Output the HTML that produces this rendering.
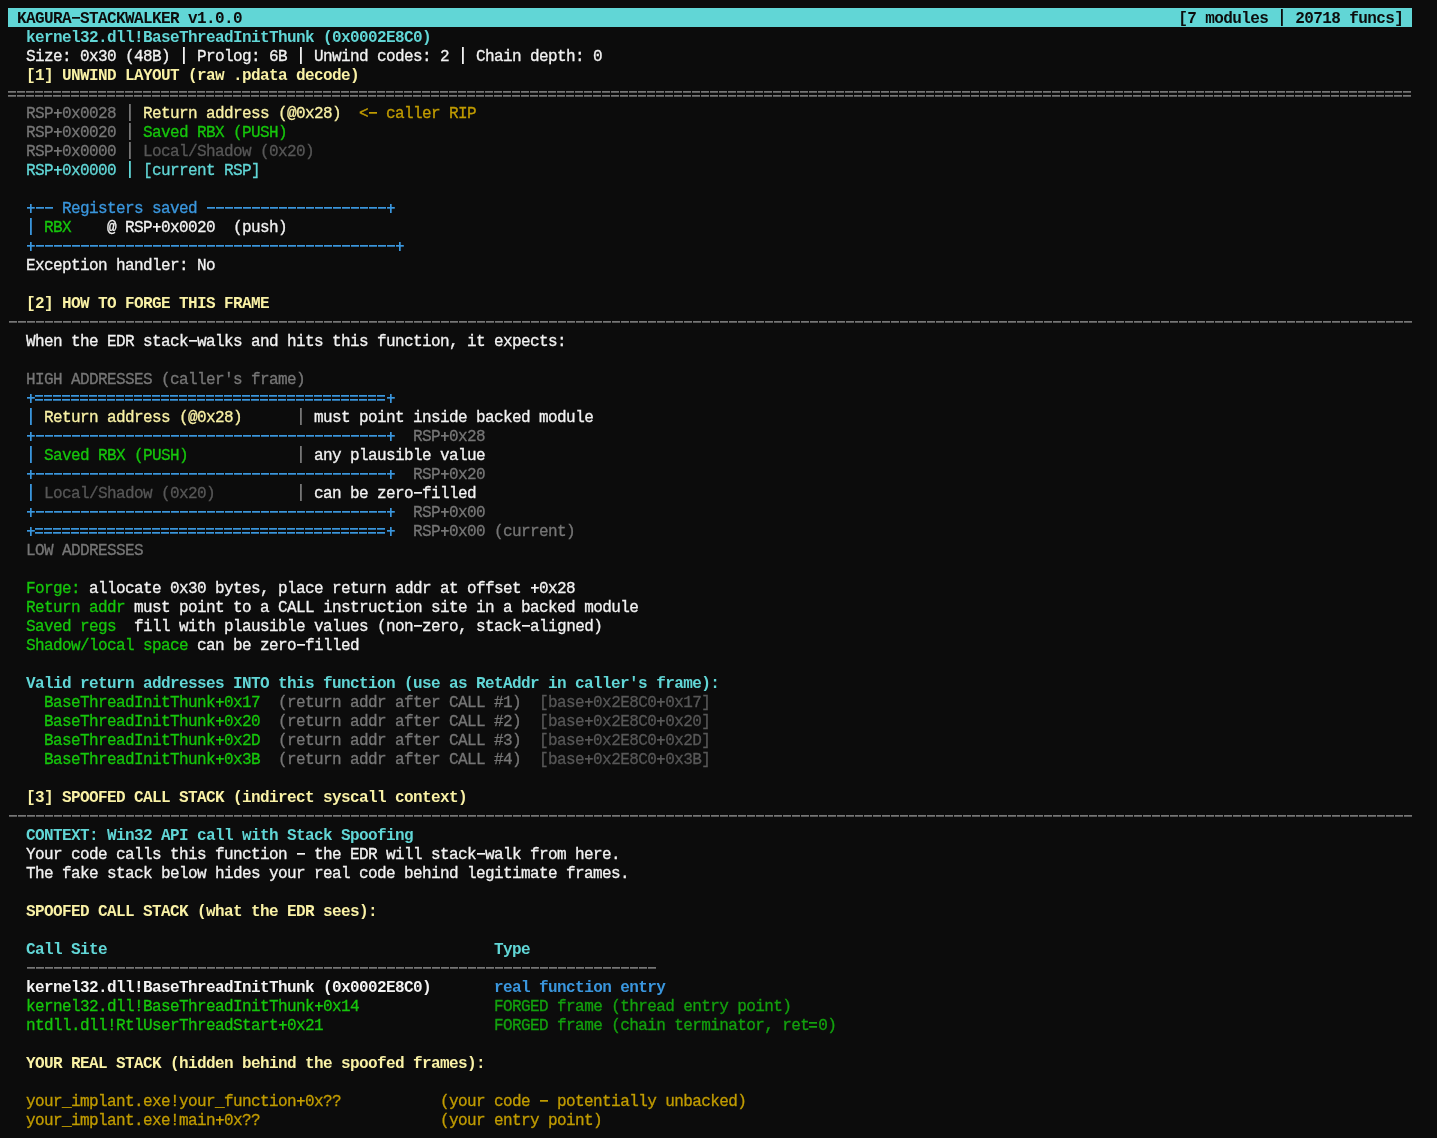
<!DOCTYPE html><html><head><meta charset="utf-8"><style>
html,body{margin:0;padding:0;background:#0c0c0c;width:1437px;height:1138px;overflow:hidden;position:relative}
.t{position:absolute;left:8px;width:1404px;height:19px;white-space:pre;font-family:"Liberation Mono",monospace;font-size:16px;letter-spacing:-0.6px;line-height:19px;color:#f2f2f2;-webkit-text-stroke-width:0.3px}
.hdr{position:absolute;left:8px;top:8px;width:1404px;height:19px;background:#61d6d6}
.s{position:absolute}
.wrap{position:absolute;left:0;top:0;width:1437px;height:1138px;will-change:transform}
.w{color:#f2f2f2}.Wb{color:#f2f2f2;font-weight:bold}
.g{color:#767676}.d{color:#575757}
.c{color:#61d6d6}.cb{color:#61d6d6;font-weight:bold}
.b{color:#3a96dd}.bb{color:#3a96dd;font-weight:bold}
.gr{color:#16c60c}.gd{color:#13a10e}
.y{color:#c19c00}
.Y{color:#f9f1a5}.Yb{color:#f9f1a5;font-weight:bold}
.k{color:#0c0c0c;font-weight:bold}
.Wb,.cb,.bb,.Yb,.k{-webkit-text-stroke-width:0}
.dash{height:2px;background-image:linear-gradient(to right,transparent .6px,var(--c) .6px,var(--c) 8.6px,transparent 8.6px);background-size:9px 2px;background-repeat:repeat-x;-webkit-mask-image:linear-gradient(to bottom,#000 1px,rgba(0,0,0,.72) 1px)}
.eq{height:6px;background-image:linear-gradient(to right,transparent .5px,var(--c) .5px,var(--c) 8.5px,transparent 8.5px),linear-gradient(to right,transparent .5px,var(--c) .5px,var(--c) 8.5px,transparent 8.5px);background-size:9px 2px,9px 2px;background-position:0 0,0 4px;background-repeat:repeat-x;-webkit-mask-image:linear-gradient(to bottom,#000 1px,rgba(0,0,0,.72) 1px,rgba(0,0,0,.72) 2px,#000 2px,#000 5px,rgba(0,0,0,.72) 5px)}
.pl{width:9px;height:19px;background:linear-gradient(var(--c),var(--c)) no-repeat .8px 9.1px/7.8px 1.7px,linear-gradient(var(--c),var(--c)) no-repeat 3.9px 5.5px/1.7px 9px}
.vb{width:9px;height:19px;background:linear-gradient(var(--c),var(--c)) no-repeat 3.9px 1px/1.8px 17px}
</style></head><body>
<div class="wrap">
<div class="hdr"></div>
<div class="t" style="top:10px"><span class="k"> KAGURA STACKWALKER v1.0.0                                                                                                        [7 modules   20718 funcs] </span></div>
<div class="t" style="top:29px">  <span class="cb">kernel32.dll!BaseThreadInitThunk (0x0002E8C0)</span></div>
<div class="t" style="top:48px"><span class="w">  Size: 0x30 (48B)   Prolog: 6B   Unwind codes: 2   Chain depth: 0</span></div>
<div class="t" style="top:67px">  <span class="Yb">[1] UNWIND LAYOUT (raw .pdata decode)</span></div>
<div class="t" style="top:105px"><span class="g">  RSP 0x0028   </span><span class="Y">Return address (@0x28)</span><span class="y">  &lt;  caller RIP</span></div>
<div class="t" style="top:124px"><span class="g">  RSP 0x0020   </span><span class="gr">Saved RBX (PUSH)</span></div>
<div class="t" style="top:143px"><span class="g">  RSP 0x0000   </span><span class="d">Local/Shadow (0x20)</span></div>
<div class="t" style="top:162px"><span class="c">  RSP 0x0000   [current RSP]</span></div>
<div class="t" style="top:200px">      <span class="b">Registers saved</span>                      </div>
<div class="t" style="top:219px">    <span class="gr">RBX</span><span class="w">    @ RSP 0x0020  (push)</span></div>
<div class="t" style="top:257px"><span class="w">  Exception handler: No</span></div>
<div class="t" style="top:295px">  <span class="Yb">[2] HOW TO FORGE THIS FRAME</span></div>
<div class="t" style="top:333px"><span class="w">  When the EDR stack walks and hits this function, it expects:</span></div>
<div class="t" style="top:371px"><span class="g">  HIGH ADDRESSES (caller&#x27;s frame)</span></div>
<div class="t" style="top:409px">    <span class="Y">Return address (@0x28)</span>       <span class="w"> must point inside backed module</span></div>
<div class="t" style="top:428px">                                           <span class="g">  RSP 0x28</span></div>
<div class="t" style="top:447px">    <span class="gr">Saved RBX (PUSH)</span>             <span class="w"> any plausible value</span></div>
<div class="t" style="top:466px">                                           <span class="g">  RSP 0x20</span></div>
<div class="t" style="top:485px">    <span class="d">Local/Shadow (0x20)</span>          <span class="w"> can be zero filled</span></div>
<div class="t" style="top:504px">                                           <span class="g">  RSP 0x00</span></div>
<div class="t" style="top:523px">                                           <span class="g">  RSP 0x00 (current)</span></div>
<div class="t" style="top:542px"><span class="g">  LOW ADDRESSES</span></div>
<div class="t" style="top:580px">  <span class="gr">Forge:</span><span class="w"> allocate 0x30 bytes, place return addr at offset  0x28</span></div>
<div class="t" style="top:599px">  <span class="gr">Return addr</span><span class="w"> must point to a CALL instruction site in a backed module</span></div>
<div class="t" style="top:618px">  <span class="gr">Saved regs</span><span class="w">  fill with plausible values (non zero, stack aligned)</span></div>
<div class="t" style="top:637px">  <span class="gr">Shadow/local space</span><span class="w"> can be zero filled</span></div>
<div class="t" style="top:675px">  <span class="cb">Valid return addresses INTO this function (use as RetAddr in caller&#x27;s frame):</span></div>
<div class="t" style="top:694px">    <span class="gr">BaseThreadInitThunk 0x17</span><span class="g">  (return addr after CALL #1)</span><span class="d">  [base 0x2E8C0 0x17]</span></div>
<div class="t" style="top:713px">    <span class="gr">BaseThreadInitThunk 0x20</span><span class="g">  (return addr after CALL #2)</span><span class="d">  [base 0x2E8C0 0x20]</span></div>
<div class="t" style="top:732px">    <span class="gr">BaseThreadInitThunk 0x2D</span><span class="g">  (return addr after CALL #3)</span><span class="d">  [base 0x2E8C0 0x2D]</span></div>
<div class="t" style="top:751px">    <span class="gr">BaseThreadInitThunk 0x3B</span><span class="g">  (return addr after CALL #4)</span><span class="d">  [base 0x2E8C0 0x3B]</span></div>
<div class="t" style="top:789px">  <span class="Yb">[3] SPOOFED CALL STACK (indirect syscall context)</span></div>
<div class="t" style="top:827px">  <span class="cb">CONTEXT: Win32 API call with Stack Spoofing</span></div>
<div class="t" style="top:846px"><span class="w">  Your code calls this function   the EDR will stack walk from here.</span></div>
<div class="t" style="top:865px"><span class="w">  The fake stack below hides your real code behind legitimate frames.</span></div>
<div class="t" style="top:903px">  <span class="Yb">SPOOFED CALL STACK (what the EDR sees):</span></div>
<div class="t" style="top:941px">  <span class="cb">Call Site</span>                                           <span class="cb">Type</span></div>
<div class="t" style="top:979px">  <span class="Wb">kernel32.dll!BaseThreadInitThunk (0x0002E8C0)</span>       <span class="bb">real function entry</span></div>
<div class="t" style="top:998px">  <span class="gr">kernel32.dll!BaseThreadInitThunk 0x14               </span><span class="gd">FORGED frame (thread entry point)</span></div>
<div class="t" style="top:1017px">  <span class="gr">ntdll.dll!RtlUserThreadStart 0x21                   </span><span class="gd">FORGED frame (chain terminator, ret 0)</span></div>
<div class="t" style="top:1055px">  <span class="Yb">YOUR REAL STACK (hidden behind the spoofed frames):</span></div>
<div class="t" style="top:1093px">  <span class="y">your_implant.exe!your_function 0x??           </span><span class="y">(your code   potentially unbacked)</span></div>
<div class="t" style="top:1112px">  <span class="y">your_implant.exe!main 0x??                    </span><span class="y">(your entry point)</span></div>
<div class="s dash" style="left:71px;top:17px;width:9px;--c:#0c0c0c"></div>
<div class="s vb" style="left:1277px;top:8px;--c:#0c0c0c"></div>
<div class="s vb" style="left:179px;top:46px;--c:#f2f2f2"></div>
<div class="s vb" style="left:296px;top:46px;--c:#f2f2f2"></div>
<div class="s vb" style="left:458px;top:46px;--c:#f2f2f2"></div>
<div class="s eq" style="left:8px;top:91px;width:1404px;--c:#767676"></div>
<div class="s pl" style="left:53px;top:103px;--c:#767676"></div>
<div class="s vb" style="left:125px;top:103px;--c:#767676"></div>
<div class="s dash" style="left:368px;top:112px;width:9px;--c:#c19c00"></div>
<div class="s pl" style="left:53px;top:122px;--c:#767676"></div>
<div class="s vb" style="left:125px;top:122px;--c:#767676"></div>
<div class="s pl" style="left:53px;top:141px;--c:#767676"></div>
<div class="s vb" style="left:125px;top:141px;--c:#767676"></div>
<div class="s pl" style="left:53px;top:160px;--c:#61d6d6"></div>
<div class="s vb" style="left:125px;top:160px;--c:#61d6d6"></div>
<div class="s pl" style="left:26px;top:198px;--c:#3a96dd"></div>
<div class="s dash" style="left:35px;top:207px;width:18px;--c:#3a96dd"></div>
<div class="s dash" style="left:206px;top:207px;width:180px;--c:#3a96dd"></div>
<div class="s pl" style="left:386px;top:198px;--c:#3a96dd"></div>
<div class="s vb" style="left:26px;top:217px;--c:#3a96dd"></div>
<div class="s pl" style="left:152px;top:217px;--c:#f2f2f2"></div>
<div class="s pl" style="left:26px;top:236px;--c:#3a96dd"></div>
<div class="s dash" style="left:35px;top:245px;width:360px;--c:#3a96dd"></div>
<div class="s pl" style="left:395px;top:236px;--c:#3a96dd"></div>
<div class="s dash" style="left:8px;top:321px;width:1404px;--c:#767676"></div>
<div class="s dash" style="left:188px;top:340px;width:9px;--c:#f2f2f2"></div>
<div class="s pl" style="left:26px;top:388px;--c:#3a96dd"></div>
<div class="s eq" style="left:35px;top:395px;width:351px;--c:#3a96dd"></div>
<div class="s pl" style="left:386px;top:388px;--c:#3a96dd"></div>
<div class="s vb" style="left:26px;top:407px;--c:#3a96dd"></div>
<div class="s vb" style="left:296px;top:407px;--c:#767676"></div>
<div class="s pl" style="left:26px;top:426px;--c:#3a96dd"></div>
<div class="s dash" style="left:35px;top:435px;width:351px;--c:#3a96dd"></div>
<div class="s pl" style="left:386px;top:426px;--c:#3a96dd"></div>
<div class="s pl" style="left:440px;top:426px;--c:#767676"></div>
<div class="s vb" style="left:26px;top:445px;--c:#3a96dd"></div>
<div class="s vb" style="left:296px;top:445px;--c:#767676"></div>
<div class="s pl" style="left:26px;top:464px;--c:#3a96dd"></div>
<div class="s dash" style="left:35px;top:473px;width:351px;--c:#3a96dd"></div>
<div class="s pl" style="left:386px;top:464px;--c:#3a96dd"></div>
<div class="s pl" style="left:440px;top:464px;--c:#767676"></div>
<div class="s vb" style="left:26px;top:483px;--c:#3a96dd"></div>
<div class="s vb" style="left:296px;top:483px;--c:#767676"></div>
<div class="s dash" style="left:413px;top:492px;width:9px;--c:#f2f2f2"></div>
<div class="s pl" style="left:26px;top:502px;--c:#3a96dd"></div>
<div class="s dash" style="left:35px;top:511px;width:351px;--c:#3a96dd"></div>
<div class="s pl" style="left:386px;top:502px;--c:#3a96dd"></div>
<div class="s pl" style="left:440px;top:502px;--c:#767676"></div>
<div class="s pl" style="left:26px;top:521px;--c:#3a96dd"></div>
<div class="s eq" style="left:35px;top:528px;width:351px;--c:#3a96dd"></div>
<div class="s pl" style="left:386px;top:521px;--c:#3a96dd"></div>
<div class="s pl" style="left:440px;top:521px;--c:#767676"></div>
<div class="s pl" style="left:530px;top:578px;--c:#f2f2f2"></div>
<div class="s dash" style="left:413px;top:625px;width:9px;--c:#f2f2f2"></div>
<div class="s dash" style="left:521px;top:625px;width:9px;--c:#f2f2f2"></div>
<div class="s dash" style="left:296px;top:644px;width:9px;--c:#f2f2f2"></div>
<div class="s pl" style="left:215px;top:692px;--c:#16c60c"></div>
<div class="s pl" style="left:584px;top:692px;--c:#575757"></div>
<div class="s pl" style="left:656px;top:692px;--c:#575757"></div>
<div class="s pl" style="left:215px;top:711px;--c:#16c60c"></div>
<div class="s pl" style="left:584px;top:711px;--c:#575757"></div>
<div class="s pl" style="left:656px;top:711px;--c:#575757"></div>
<div class="s pl" style="left:215px;top:730px;--c:#16c60c"></div>
<div class="s pl" style="left:584px;top:730px;--c:#575757"></div>
<div class="s pl" style="left:656px;top:730px;--c:#575757"></div>
<div class="s pl" style="left:215px;top:749px;--c:#16c60c"></div>
<div class="s pl" style="left:584px;top:749px;--c:#575757"></div>
<div class="s pl" style="left:656px;top:749px;--c:#575757"></div>
<div class="s dash" style="left:8px;top:815px;width:1404px;--c:#767676"></div>
<div class="s dash" style="left:296px;top:853px;width:9px;--c:#f2f2f2"></div>
<div class="s dash" style="left:476px;top:853px;width:9px;--c:#f2f2f2"></div>
<div class="s dash" style="left:26px;top:967px;width:630px;--c:#767676"></div>
<div class="s pl" style="left:314px;top:996px;--c:#16c60c"></div>
<div class="s pl" style="left:278px;top:1015px;--c:#16c60c"></div>
<div class="s eq" style="left:809px;top:1022px;width:9px;--c:#13a10e"></div>
<div class="s pl" style="left:296px;top:1091px;--c:#c19c00"></div>
<div class="s dash" style="left:539px;top:1100px;width:9px;--c:#c19c00"></div>
<div class="s pl" style="left:215px;top:1110px;--c:#c19c00"></div>
</div></body></html>
